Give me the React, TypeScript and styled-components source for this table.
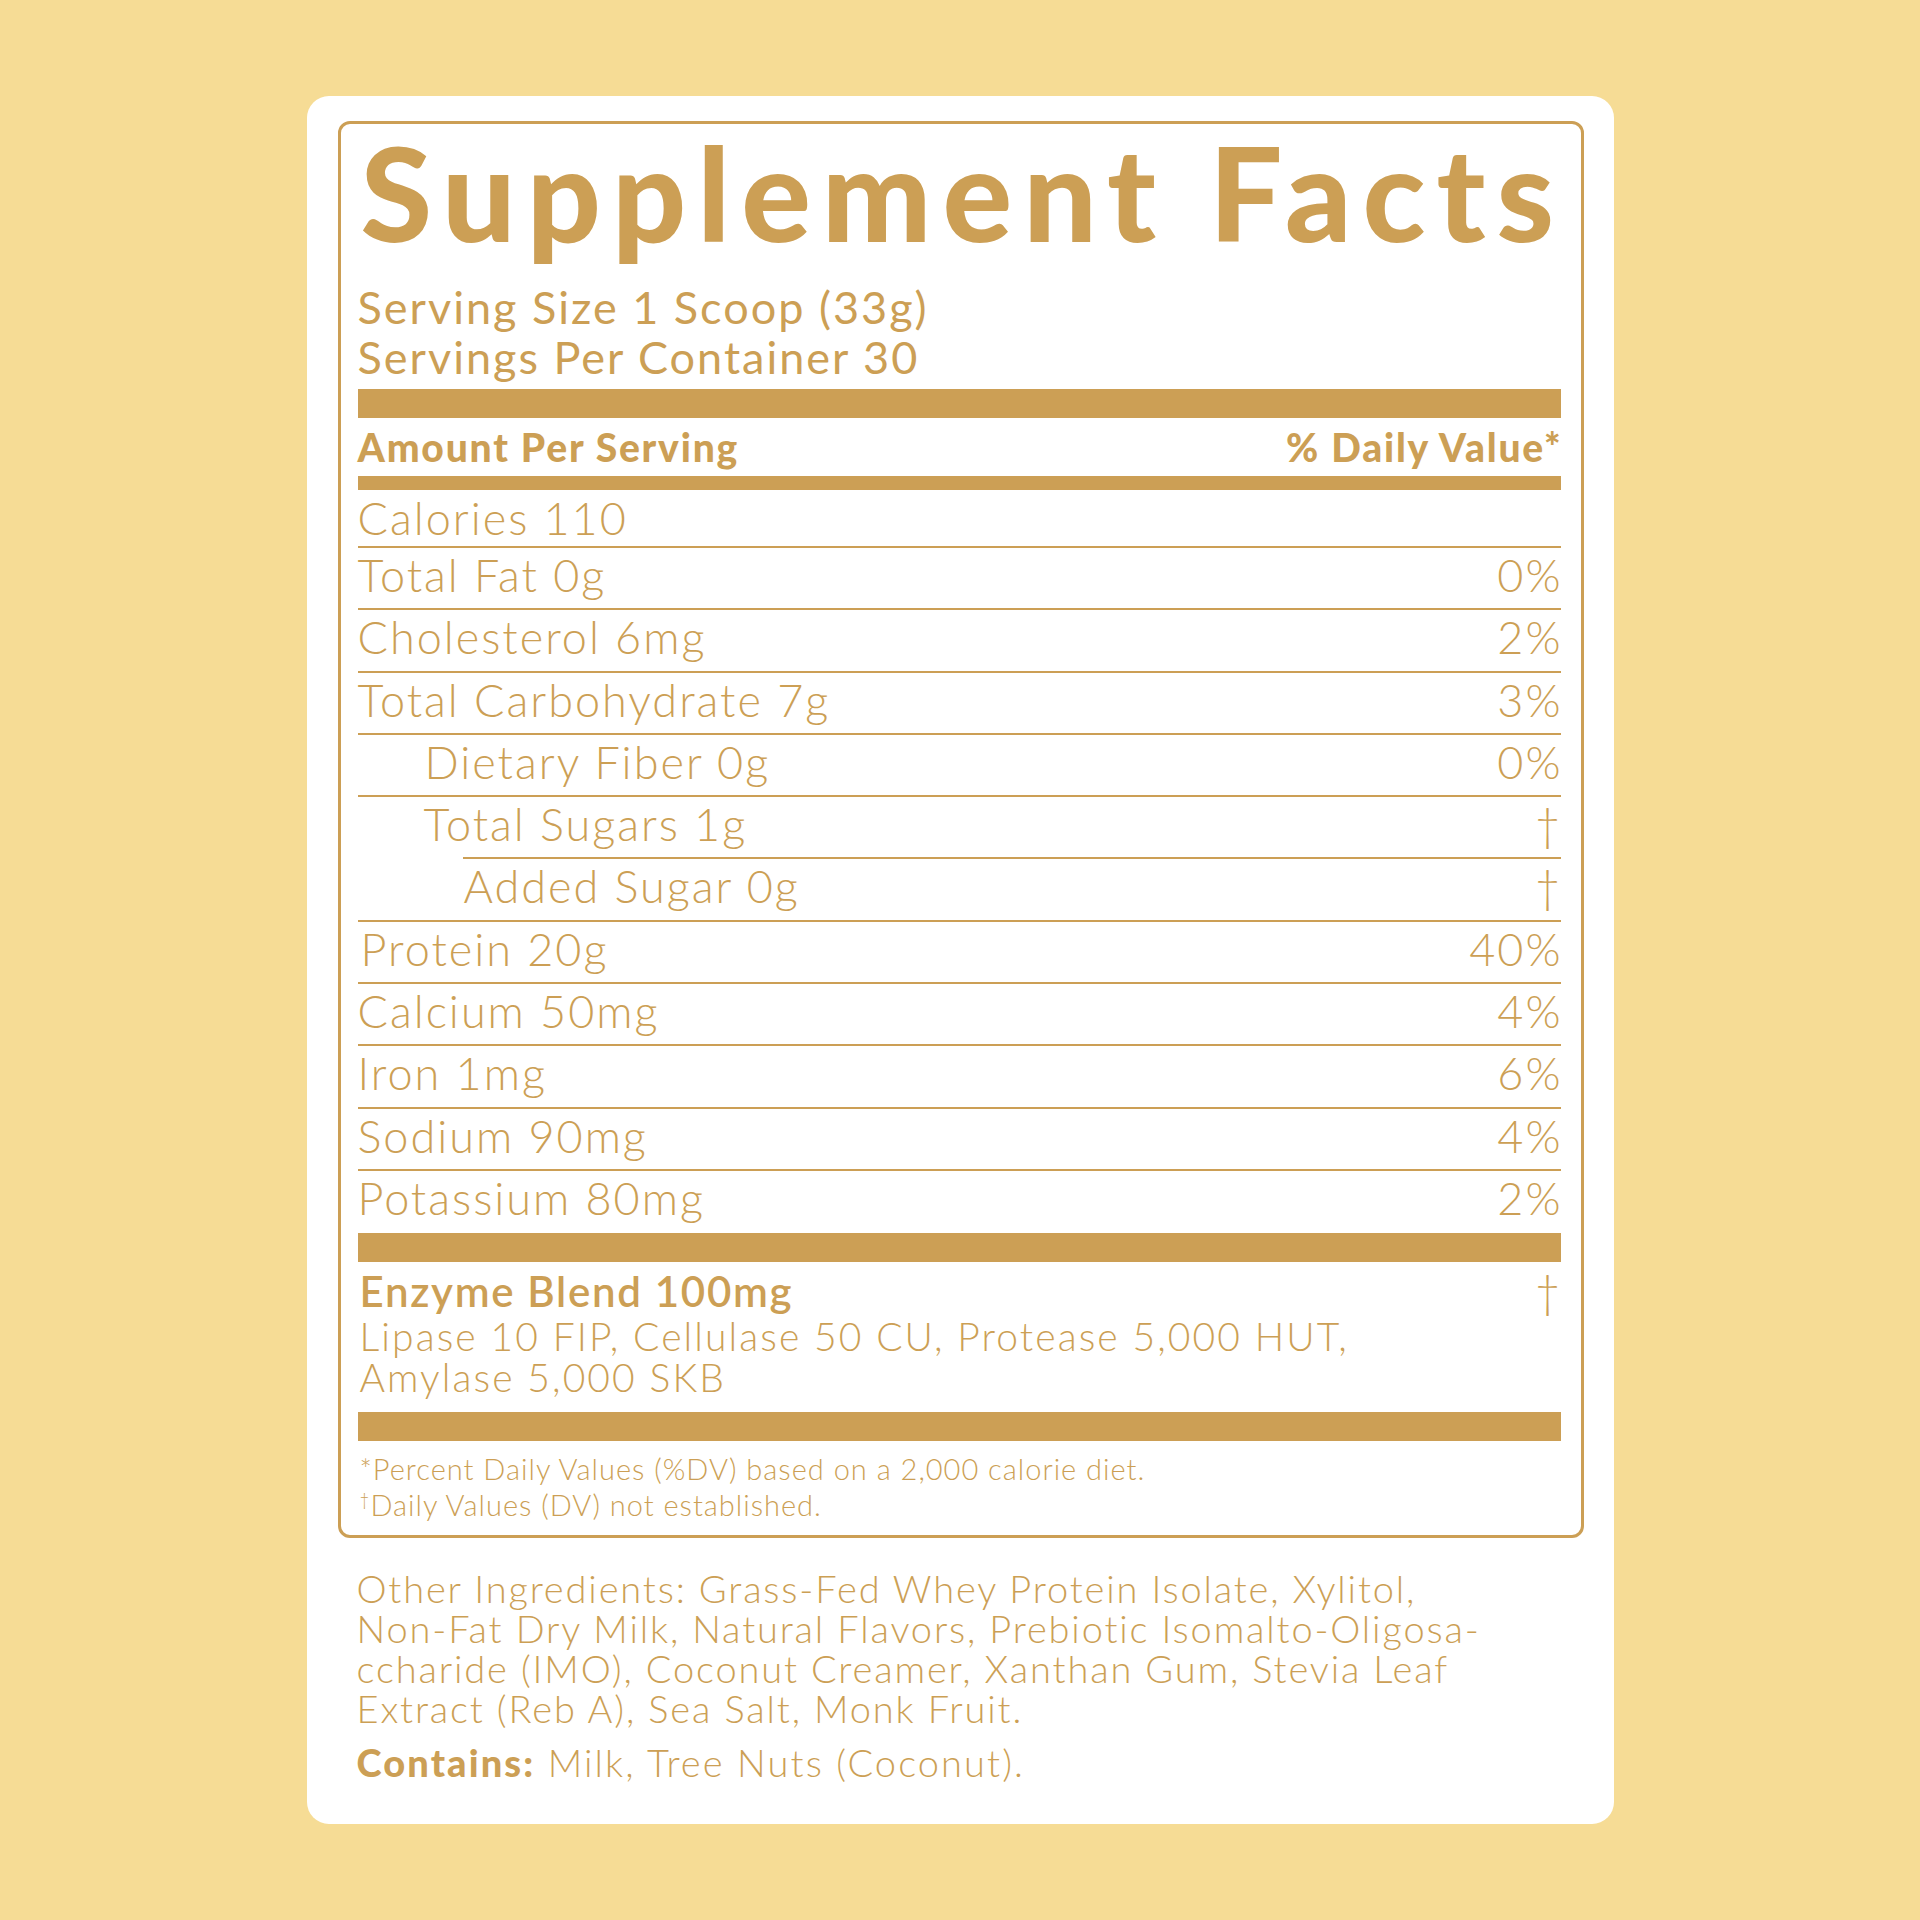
import styled, { createGlobalStyle } from "styled-components";

const gold = "#cc9f55";

const GlobalStyle = createGlobalStyle`
  html, body {
    margin: 0;
    padding: 0;
    background: #f6dc95;
  }
  body {
    font-family: Lato, "Open Sans", sans-serif;
    color: ${gold};
  }
`;

const Page = styled.div`
  width: 1920px;
  height: 1920px;
  padding-top: 96px;
  box-sizing: border-box;
  display: flex;
  justify-content: center;
`;

const Card = styled.div`
  width: 1307px;
  height: 1728px;
  box-sizing: border-box;
  background: #ffffff;
  border-radius: 22px;
  padding: 25px 30px 0 31px;
`;

const Label = styled.div`
  border: 3px solid ${gold};
  border-radius: 12px;
  padding: 0 20px 12px 17px;
`;

const Title = styled.h1`
  margin: 4px 0 0 3px;
  font-size: 130px;
  line-height: 128px;
  font-weight: 900;
  letter-spacing: 11px;
  white-space: nowrap;
`;

const Serving = styled.div`
  margin-top: 26px;
  font-size: 45px;
  line-height: 50px;
  font-weight: 400;
  letter-spacing: 2px;
`;

const Bar = styled.div<{ $h: number }>`
  height: ${(p) => p.$h}px;
  background: ${gold};
`;

const HeaderRow = styled.div`
  display: flex;
  justify-content: space-between;
  height: 58px;
  line-height: 58px;
  font-size: 39px;
  font-weight: 900;
  letter-spacing: 1.8px;
`;

const Row = styled.div<{ $h?: number; $inset?: number; $last?: boolean }>`
  display: flex;
  justify-content: space-between;
  align-items: flex-start;
  height: ${(p) => p.$h ?? 62.3}px;
  margin-left: ${(p) => p.$inset ?? 0}px;
  border-bottom: ${(p) => (p.$last ? "none" : `2px solid ${gold}`)};
  font-size: 45px;
  line-height: 54px;
  font-weight: 300;
  letter-spacing: 2px;
  padding-top: ${(p) => (p.$h === 58 ? 1 : 0)}px;
  box-sizing: border-box;
`;

const Name = styled.span<{ $indent?: number }>`
  margin-left: ${(p) => p.$indent ?? 0}px;
  white-space: nowrap;
`;

const Value = styled.span`
  white-space: nowrap;
  margin-right: -2px;
`;

const Blend = styled.div`
  display: flex;
  justify-content: space-between;
  align-items: flex-start;
  padding: 7px 0 14px 2px;
`;

const BlendText = styled.div`
  display: flex;
  flex-direction: column;
`;

const BlendName = styled.div`
  font-size: 42px;
  line-height: 44px;
  font-weight: 600;
  letter-spacing: 1.7px;
  margin-bottom: 3px;
`;

const BlendList = styled.div`
  font-size: 39px;
  line-height: 41px;
  font-weight: 300;
  letter-spacing: 2.1px;
`;

const Dagger = styled.span`
  font-size: 45px;
  line-height: 44px;
  font-weight: 300;
`;

const Notes = styled.div`
  margin-top: 10px;
  padding-left: 2px;
  font-size: 29px;
  line-height: 36px;
  font-weight: 300;
  letter-spacing: 1px;
`;

const Sup = styled.sup`
  font-size: 17px;
  vertical-align: 10px;
  line-height: 0;
`;

const Ingredients = styled.div`
  padding: 30px 0 0 19px;
  font-size: 38px;
  line-height: 40px;
  font-weight: 300;
  letter-spacing: 1.85px;
`;

const Contains = styled.div`
  margin-top: 14px;
  letter-spacing: 2.1px;
  b {
    font-weight: 900;
  }
`;

type Nutrient = {
  name: string;
  value: string;
  indent?: number;
  inset?: number;
  h?: number;
};

const nutrients: Nutrient[] = [
  { name: "Calories 110", value: "", h: 58 },
  { name: "Total Fat 0g", value: "0%" },
  { name: "Cholesterol 6mg", value: "2%" },
  { name: "Total Carbohydrate 7g", value: "3%" },
  { name: "Dietary Fiber 0g", value: "0%", indent: 67 },
  { name: "Total Sugars 1g", value: "†", indent: 66, inset: 105 },
  { name: "Added Sugar 0g", value: "†", indent: 106 },
  { name: "Protein 20g", value: "40%", indent: 3 },
  { name: "Calcium 50mg", value: "4%" },
  { name: "Iron 1mg", value: "6%" },
  { name: "Sodium 90mg", value: "4%" },
  { name: "Potassium 80mg", value: "2%" },
];

export default function App() {
  return (
    <Page>
      <GlobalStyle />
      <Card>
        <Label>
          <Title>Supplement Facts</Title>
          <Serving>
            Serving Size 1 Scoop (33g)
            <br />
            Servings Per Container 30
          </Serving>
          <Bar $h={29} style={{ marginTop: 7 }} />
          <HeaderRow>
            <span>Amount Per Serving</span>
            <span style={{ marginRight: -2 }}>% Daily Value*</span>
          </HeaderRow>
          <Bar $h={14} />
          {nutrients.map((n, i) => (
            <Row
              key={n.name}
              $h={n.h}
              $inset={n.inset}
              $last={i === nutrients.length - 1}
            >
              <Name $indent={(n.indent ?? 0) - (n.inset ?? 0)}>{n.name}</Name>
              <Value>{n.value}</Value>
            </Row>
          ))}
          <Bar $h={29} />
          <Blend>
            <BlendText>
              <BlendName>Enzyme Blend 100mg</BlendName>
              <BlendList>
                Lipase 10 FIP, Cellulase 50 CU, Protease 5,000 HUT,
                <br />
                Amylase 5,000 SKB
              </BlendList>
            </BlendText>
            <Dagger>†</Dagger>
          </Blend>
          <Bar $h={29} />
          <Notes>
            *Percent Daily Values (%DV) based on a 2,000 calorie diet.
            <br />
            <Sup>†</Sup>Daily Values (DV) not established.
          </Notes>
        </Label>
        <Ingredients>
          Other Ingredients: Grass-Fed Whey Protein Isolate, Xylitol,
          <br />
          Non-Fat Dry Milk, Natural Flavors, Prebiotic Isomalto-Oligosa-
          <br />
          ccharide (IMO), Coconut Creamer, Xanthan Gum, Stevia Leaf
          <br />
          Extract (Reb A), Sea Salt, Monk Fruit.
          <Contains>
            <b>Contains:</b> Milk, Tree Nuts (Coconut).
          </Contains>
        </Ingredients>
      </Card>
    </Page>
  );
}
